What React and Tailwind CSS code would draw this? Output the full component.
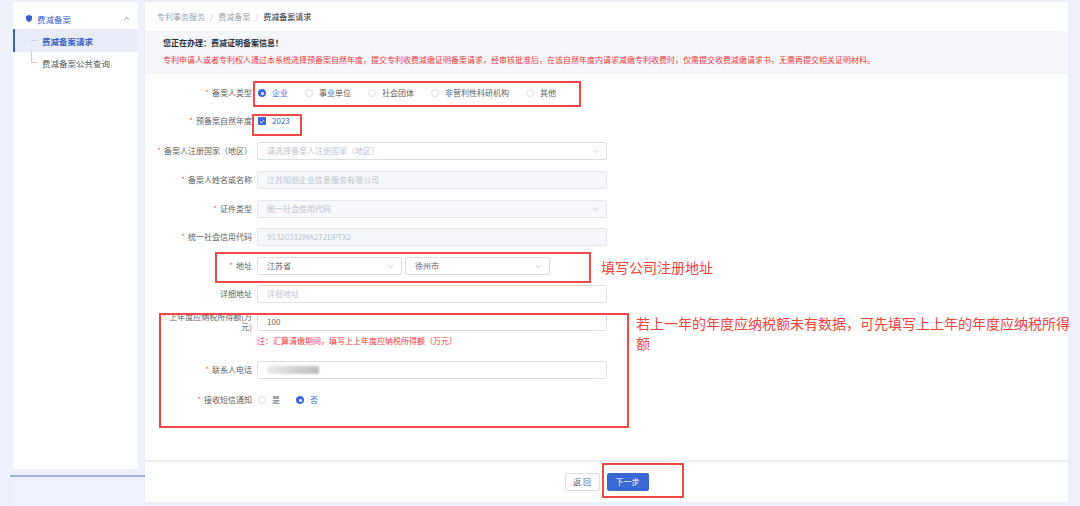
import React from "react";

const Chevron = () => (
  <svg width="7" height="5" viewBox="0 0 7 5" className="shrink-0">
    <path d="M0.8 1 L3.5 3.7 L6.2 1" fill="none" stroke="#c0c4cc" strokeWidth="0.8" />
  </svg>
);

function Label({ children, twoLine }) {
  return (
    <div
      className={`w-[96px] shrink-0 text-right text-[8px] leading-[10px] text-[#606266] ${
        twoLine ? "-mt-[1px]" : ""
      }`}
    >
      <span className="text-[#f56c6c] mr-[3px]">*</span>
      {children}
    </div>
  );
}

function Field({ value, placeholder, disabled, select, w = "w-[350px]" }) {
  return (
    <div
      className={`${w} h-[18px] rounded-[2px] border flex items-center justify-between pl-[9px] pr-[7px] text-[8px] leading-[10px] ${
        disabled ? "bg-[#f5f7fa] border-[#e4e7ed]" : "bg-white border-[#dcdfe6]"
      }`}
    >
      <span className={value && !disabled ? "text-[#606266]" : "text-[#c0c4cc]"}>
        {value || placeholder}
      </span>
      {select && <Chevron />}
    </div>
  );
}

function Radio({ checked, label }) {
  return (
    <div className="flex items-center gap-[6px]">
      {checked ? (
        <span className="w-[8px] h-[8px] rounded-full bg-[#3d68d8] flex items-center justify-center">
          <span className="w-[3px] h-[3px] rounded-full bg-white" />
        </span>
      ) : (
        <span className="w-[8px] h-[8px] rounded-full border border-[#dcdfe6] bg-white" />
      )}
      <span className={`text-[8px] leading-[10px] ${checked ? "text-[#3d68d8]" : "text-[#606266]"}`}>
        {label}
      </span>
    </div>
  );
}

export default function App() {
  return (
    <div className="w-[1080px] h-[506px] overflow-hidden flex bg-[#edf0f8] font-['Noto_Sans_CJK_SC','Noto_Sans',sans-serif]">
      {/* Sidebar */}
      <aside className="ml-[10px] w-[135px] shrink-0 flex flex-col">
        <div className="ml-[3px] mt-[2px] w-[125px] h-[467px] bg-white rounded-[3px] pt-[6px]">
          <div className="h-[21px] flex items-center pl-[13px] pr-[8px]">
            <svg width="6" height="7" viewBox="0 0 6 7" className="mr-[5px]">
              <path d="M3 0 L6 1.1 V3.4 C6 5.2 4.6 6.4 3 7 C1.4 6.4 0 5.2 0 3.4 V1.1 Z" fill="#3d5fc8" />
            </svg>
            <span className="text-[8.5px] leading-[10px] text-[#3d5fc8]">费减备案</span>
            <svg width="7" height="5" viewBox="0 0 7 5" className="ml-auto">
              <path d="M1 3.8 L3.5 1.3 L6 3.8" fill="none" stroke="#8a8f99" strokeWidth="0.9" />
            </svg>
          </div>
          <div className="relative">
            <div className="absolute left-[18px] top-0 w-px h-[34px] bg-[#c9ced8]" />
            <div className="relative h-[23px] bg-[#e8ecf8] flex items-center">
              <div className="absolute left-0 top-0 w-[2px] h-full bg-[#3d5fc8]" />
              <div className="absolute left-[18px] top-[11px] w-[6px] h-px bg-[#c9ced8]" />
              <span className="ml-[29px] text-[8.5px] leading-[10px] font-bold text-[#3d5fc8]">费减备案请求</span>
            </div>
            <div className="relative h-[21px] flex items-center">
              <div className="absolute left-[18px] top-[10px] w-[6px] h-px bg-[#c9ced8]" />
              <span className="ml-[29px] text-[8.5px] leading-[10px] text-[#555a63]">费减备案公共查询</span>
            </div>
          </div>
        </div>
        <div className="mt-[6px] h-[2px] bg-[#9fb0d2]" />
        <div className="flex-1 bg-[#eef0fc]" />
      </aside>

      {/* Main */}
      <main className="relative mt-[2px] w-[923px] h-[501px] shrink-0 flex flex-col">
        <div className="bg-white flex flex-col h-[458px]">
          <div className="h-[29px] flex items-center pl-[12px] text-[8px] leading-[10px] text-[#a0a4ad]">
            <span>专利事务服务</span>
            <span className="mx-[5px] text-[#b8bcc4]">/</span>
            <span>费减备案</span>
            <span className="mx-[5px] text-[#b8bcc4]">/</span>
            <span className="text-[#4a4f58] font-medium">费减备案请求</span>
          </div>
          <div className="h-[43px] bg-[#f5f6fa] pl-[18px] pt-[7px]">
            <div className="text-[8px] leading-[10px] font-bold text-[#2b2f36]">您正在办理：费减证明备案信息！</div>
            <div className="mt-[7px] text-[8px] leading-[10px] text-[#f23c3c] whitespace-nowrap">
              专利申请人或者专利权人通过本系统选择预备案自然年度，提交专利收费减缴证明备案请求，经审核批准后，在该自然年度内请求减缴专利收费时，仅需提交收费减缴请求书，无需再提交相关证明材料。
            </div>
          </div>

          {/* Form */}
          <div className="flex flex-col pl-[11px]">
            <div className="flex items-center gap-[5px] h-[18px] mt-[10px]">
              <Label>备案人类型</Label>
              <div className="flex items-center gap-[17px] pl-[1px]">
                <Radio checked label="企业" />
                <Radio label="事业单位" />
                <Radio label="社会团体" />
                <Radio label="非营利性科研机构" />
                <Radio label="其他" />
              </div>
            </div>

            <div className="flex items-center gap-[5px] h-[18px] mt-[10px]">
              <Label>预备案自然年度</Label>
              <div className="flex items-center gap-[6px] pl-[1px]">
                <span className="w-[8px] h-[8px] rounded-[1px] bg-[#3d68d8] flex items-center justify-center">
                  <svg width="6" height="5" viewBox="0 0 6 5">
                    <path d="M0.8 2.5 L2.4 4 L5.2 1" fill="none" stroke="#fff" strokeWidth="0.9" />
                  </svg>
                </span>
                <span className="text-[8px] leading-[10px] text-[#3d68d8]">2023</span>
              </div>
            </div>

            <div className="flex items-center gap-[5px] h-[18px] mt-[12px]">
              <Label>备案人注册国家（地区）</Label>
              <Field placeholder="请选择备案人注册国家（地区）" select />
            </div>

            <div className="flex items-center gap-[5px] h-[18px] mt-[11px]">
              <Label>备案人姓名或名称</Label>
              <Field value="江苏知创企业信息服务有限公司" disabled />
            </div>

            <div className="flex items-center gap-[5px] h-[18px] mt-[11px]">
              <Label>证件类型</Label>
              <Field value="统一社会信用代码" disabled select />
            </div>

            <div className="flex items-center gap-[5px] h-[18px] mt-[10px]">
              <Label>统一社会信用代码</Label>
              <Field value="91320312MA272DPTX2" disabled />
            </div>

            <div className="flex items-center gap-[5px] h-[18px] mt-[11px]">
              <Label>地址</Label>
              <div className="flex gap-[3px]">
                <Field value="江苏省" select w="w-[145px]" />
                <Field value="徐州市" select w="w-[145px]" />
              </div>
            </div>

            <div className="flex items-center gap-[5px] h-[18px] mt-[10px]">
              <div className="w-[96px] shrink-0 text-right text-[8px] leading-[10px] text-[#606266]">详细地址</div>
              <Field placeholder="详细地址" />
            </div>

            <div className="flex items-start gap-[5px] mt-[10px]">
              <Label twoLine>上年度应纳税所得额(万元)</Label>
              <Field value="100" />
            </div>
            <div className="flex gap-[5px] mt-[4px] h-[10px]">
              <div className="w-[96px] shrink-0" />
              <div className="text-[8px] leading-[10px] text-[#f23c3c]">注：汇算清缴期间，填写上上年度应纳税所得额（万元）</div>
            </div>

            <div className="flex items-center gap-[5px] h-[18px] mt-[15px]">
              <Label>联系人电话</Label>
              <div className="w-[350px] h-[18px] rounded-[2px] border border-[#dcdfe6] bg-white flex items-center pl-[9px]">
                <div className="w-[52px] h-[8px] bg-gradient-to-r from-[#ececec] via-[#d2d2d2] to-[#bdbdbd] blur-[1px]" />
              </div>
            </div>

            <div className="flex items-center gap-[5px] h-[18px] mt-[12px]">
              <Label>接收短信通知</Label>
              <div className="flex items-center gap-[16px] pl-[1px]">
                <Radio label="是" />
                <Radio checked label="否" />
              </div>
            </div>
          </div>
        </div>
        <div className="h-[2px] bg-[#eceef4]" />
        <div className="bg-white h-[40px] flex items-center justify-center gap-[7px]">
          <button className="w-[35px] h-[18px] rounded-[2px] border border-[#dcdfe6] bg-white text-[8px] leading-[10px] text-[#606266]">
            返 回
          </button>
          <button className="w-[42px] h-[18px] rounded-[2px] bg-[#3a69d6] text-[8px] leading-[10px] text-white">
            下一步
          </button>
        </div>

        {/* Annotations */}
        <div className="absolute left-[108px] top-[79px] w-[328px] h-[26px] border-2 border-[#f04a48]" />
        <div className="absolute left-[107px] top-[112px] w-[50px] h-[22px] border-2 border-[#f04a48]" />
        <div className="absolute left-[70px] top-[250px] w-[376px] h-[31px] border-2 border-[#f04a48]" />
        <div className="absolute left-[14px] top-[311px] w-[470px] h-[115px] border-2 border-[#f04a48]" />
        <div className="absolute left-[457px] top-[461px] w-[82px] h-[35px] border-2 border-[#f04a48]" />
        <div className="absolute left-[456px] top-[255px] text-[14px] leading-[20px] text-[#f2453d] whitespace-nowrap">
          填写公司注册地址
        </div>
        <div className="absolute left-[491px] top-[311px] text-[14px] leading-[20px] text-[#f2453d] whitespace-nowrap">
          若上一年的年度应纳税额未有数据，可先填写上上年的年度应纳税所得
          <br />
          额
        </div>
      </main>
    </div>
  );
}
